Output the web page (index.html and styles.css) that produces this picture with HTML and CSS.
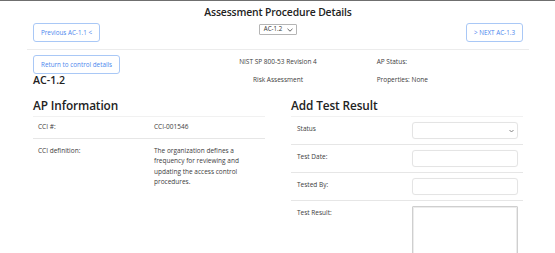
FILE: index.html
```html
<!DOCTYPE html>
<html lang="en">
<head>
<meta charset="utf-8">
<title>Assessment Procedure Details</title>
<link rel="stylesheet" href="styles.css">
</head>
<body>
<div class="page">
  <h1 class="title">Assessment Procedure Details</h1>
  <div class="nav-row">
    <div class="nav-left"><button class="btn">Previous AC-1.1 &lt;</button></div>
    <div class="nav-mid">
      <div class="mini-select"><span>AC-1.2</span><svg width="6" height="4" viewBox="0 0 6 4"><path d="M0.5 0.8 L3 3.2 L5.5 0.8" fill="none" stroke="#555" stroke-width="0.9"/></svg></div>
    </div>
    <div class="nav-right"><button class="btn">&gt; NEXT AC-1.3</button></div>
  </div>
  <hr class="sep">
  <div class="info-row">
    <div class="info-col">
      <button class="btn">Return to control details</button>
      <h2 class="ap-id">AC-1.2</h2>
    </div>
    <div class="info-col center">
      <p>NIST SP 800-53 Revision 4</p>
      <p>Risk Assessment</p>
    </div>
    <div class="info-col right">
      <p>AP Status:</p>
      <p>Properties: None</p>
    </div>
  </div>
  <div class="panels">
    <section class="panel">
      <h3 class="panel-title">AP Information</h3>
      <div class="table">
        <div class="trow"><div class="cell">CCI #:</div><div class="cell">CCI-001546</div></div>
        <div class="trow"><div class="cell">CCI definition:</div><div class="cell">The organization defines a frequency for reviewing and updating the access control procedures.</div></div>
      </div>
    </section>
    <section class="panel">
      <h3 class="panel-title">Add Test Result</h3>
      <div class="table form">
        <div class="trow"><div class="cell label">Status</div><div class="cell"><div class="field select"><svg width="5" height="4" viewBox="0 0 5 4"><path d="M0.5 1 L2.5 3 L4.5 1" fill="none" stroke="#777" stroke-width="0.9"/></svg></div></div></div>
        <div class="trow"><div class="cell label">Test Date:</div><div class="cell"><div class="field"></div></div></div>
        <div class="trow"><div class="cell label">Tested By:</div><div class="cell"><div class="field"></div></div></div>
        <div class="trow last"><div class="cell label">Test Result:</div><div class="cell"><div class="textarea"></div></div></div>
      </div>
    </section>
  </div>
</div>
</body>
</html>
```

FILE: styles.css
```css
* { box-sizing: border-box; }
html, body { margin: 0; padding: 0; }
body {
  width: 555px;
  height: 253px;
  overflow: hidden;
  background: #fff;
  border-top: 1px solid #6f6f6f;
  font-family: "Open Sans", "Noto Sans", sans-serif;
  font-size: 6.5px;
  line-height: 10.6px;
  color: #3c3c3c;
}
.page { padding: 0 32px 0 33px; }
.title {
  margin: 0;
  padding-top: 4px;
  height: 22px;
  text-align: center;
  font-size: 10.4px;
  letter-spacing: -0.15px;
  line-height: 14px;
  font-weight: 600;
  color: #222;
}
.nav-row {
  display: grid;
  grid-template-columns: 1fr auto 1fr;
  align-items: start;
}
.nav-mid { padding-top: 1px; }
.nav-right { display: flex; justify-content: flex-end; }
.btn {
  font-family: inherit;
  font-size: 6.3px;
  line-height: 10px;
  color: #4b86ee;
  background: #fff;
  border: 1px solid #a9c8f6;
  border-radius: 3px;
  padding: 4px 7px 3px;
  height: 19px;
  margin: 0;
}
.mini-select {
  display: flex;
  align-items: center;
  gap: 5px;
  height: 11px;
  padding: 0 3px 0 4px;
  border: 1px solid #b5b5b5;
  border-radius: 1px;
  font-size: 6.2px;
  color: #333;
}
.sep {
  margin: 7px -6px 0 -6px;
  border: 0;
  border-top: 1px solid #ececec;
}
.info-row {
  display: grid;
  grid-template-columns: repeat(3, 1fr);
  padding-top: 5px;
}
.info-col p { margin: 0; }
.info-col.center { text-align: center; padding-top: 2px; }
.info-col.center p + p, .info-col.right p + p { margin-top: 7px; }
.info-col.right { padding-left: 17px; padding-top: 2px; }
.ap-id {
  margin: 0;
  font-size: 10.6px;
  line-height: 13px;
  font-weight: 600;
  color: #222;
}
.panels {
  display: grid;
  grid-template-columns: 1fr 1fr;
  column-gap: 26px;
  padding-top: 10px;
}
.panel-title {
  margin: 0;
  font-size: 11.8px;
  letter-spacing: -0.1px;
  line-height: 16px;
  font-weight: 600;
  color: #222;
  padding-bottom: 3px;
}
.table { border-top: 1px solid #f1f1f1; }
.trow {
  display: grid;
  grid-template-columns: 1fr 1fr;
  border-bottom: 1px solid #e6e6e6;
}
.cell { padding: 5px; }
.table:not(.form) .trow:last-child { border-bottom: 0; }
.table:not(.form) .trow:last-child .cell { padding-top: 7px; }
.form .cell.label { padding-left: 6px; padding-top: 7px; }
.form .trow { height: 28px; }
.form .trow.last { height: 70px; border-bottom: 0; }
.field {
  height: 17px;
  border: 1px solid #e4e4e4;
  border-radius: 3px;
  box-shadow: 0 0 1px rgba(0,0,0,0.06);
}
.field.select {
  display: flex;
  align-items: center;
  justify-content: flex-end;
  padding-right: 3px;
}
.textarea {
  height: 70px;
  border: 1px solid #cfcfcf;
  border-radius: 1px;
  box-shadow: inset 0 0 0 1px #ececec;
}
```
